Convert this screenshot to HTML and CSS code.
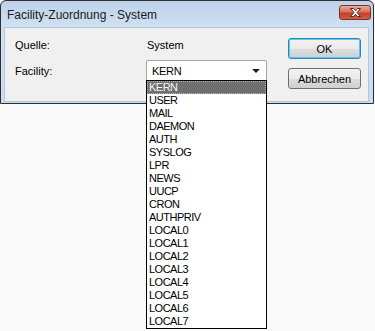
FILE: index.html
```html
<!DOCTYPE html>
<html lang="de">
<head>
  <meta charset="UTF-8">
  <title>Facility-Zuordnung - System</title>
  <link rel="stylesheet" href="styles.css">
</head>
<body>
  <div class="window">
    <div class="titlebar">
      <span class="title">Facility-Zuordnung - System</span>
      <button class="close" aria-label="Schließen">
        <svg width="13" height="11" viewBox="0 0 13 11">
          <path d="M1.5 1.5 L4.5 1.5 L6.5 3.8 L8.5 1.5 L11.5 1.5 L8 5.5 L11.5 9.5 L8.5 9.5 L6.5 7.2 L4.5 9.5 L1.5 9.5 L5 5.5 Z" fill="#fff" stroke="#5a2a24" stroke-width="1" stroke-linejoin="round"/>
        </svg>
      </button>
    </div>
    <div class="content">
      <div class="form">
        <span class="label">Quelle:</span>
        <span class="value">System</span>
        <span class="label">Facility:</span>
        <div class="combo">
          <div class="combo-box">
            <span>KERN</span>
            <span class="arrow"></span>
          </div>
          <ul class="list">
            <li class="selected">KERN</li>
            <li>USER</li>
            <li>MAIL</li>
            <li>DAEMON</li>
            <li>AUTH</li>
            <li>SYSLOG</li>
            <li>LPR</li>
            <li>NEWS</li>
            <li>UUCP</li>
            <li>CRON</li>
            <li>AUTHPRIV</li>
            <li>LOCAL0</li>
            <li>LOCAL1</li>
            <li>LOCAL2</li>
            <li>LOCAL3</li>
            <li>LOCAL4</li>
            <li>LOCAL5</li>
            <li>LOCAL6</li>
            <li>LOCAL7</li>
          </ul>
        </div>
      </div>
      <div class="buttons">
        <button class="btn default">OK</button>
        <button class="btn">Abbrechen</button>
      </div>
    </div>
  </div>
</body>
</html>
```

FILE: styles.css
```css
html, body {
  min-height: 100%;
}
body {
  margin: 0;
  min-height: 331px;
  background-color: #fafafa;
  font-family: 'Liberation Sans', Arial, sans-serif;
  font-size: 11px;
  color: #000;
}
.window {
  position: relative;
  z-index: 1;
  box-sizing: border-box;
  width: 374px;
  height: 104px;
  border: 1px solid #2e2e2e;
  border-radius: 6px 6px 0 0;
  background: linear-gradient(#bcd2ea, #d3e2f2 30%, #c9dcf0);
  padding: 0 4px 1px 3px;
}
.titlebar {
  height: 26px;
  display: flex;
  align-items: center;
  justify-content: space-between;
}
.title {
  font-size: 12px;
  color: #1b1b1b;
  padding-left: 3px;
  padding-top: 1px;
}
.close {
  width: 32px;
  height: 15px;
  margin-top: -4px;
  margin-right: -2px;
  padding: 0;
  border: 1px solid #7a3328;
  border-radius: 3px;
  background: linear-gradient(#e9a99c, #d9705d 45%, #c73f27 55%, #d45a3f);
  display: flex;
  align-items: center;
  justify-content: center;
}
.content {
  display: flex;
  height: 73px;
  background-color: #f0f0f0;
  border: 1px solid #b0c8e3;
}
.form {
  flex: 1;
  display: grid;
  grid-template-columns: 131px 121px;
  grid-template-rows: 21px 21px;
  row-gap: 5px;
  align-content: start;
  align-items: center;
  padding: 6px 0 0 10px;
}
.value {
  padding-left: 1px;
}
.combo {
  position: relative;
  height: 21px;
}
.combo-box {
  box-sizing: border-box;
  height: 21px;
  display: flex;
  align-items: center;
  justify-content: space-between;
  padding: 0 6px 0 5px;
  background-color: #fff;
  border: 1px solid #a5a5a5;
  border-radius: 2px;
  letter-spacing: -0.3px;
}
.arrow {
  width: 0;
  height: 0;
  border-left: 4px solid transparent;
  border-right: 4px solid transparent;
  border-top: 4px solid #14195a;
}
.list {
  position: absolute;
  z-index: 2;
  top: 20px;
  left: 0;
  width: 121px;
  height: 249px;
  box-sizing: border-box;
  margin: 0;
  padding: 0;
  list-style: none;
  background-color: #fff;
  border: 1px solid #000;
  letter-spacing: -0.5px;
}
.list li {
  height: 13px;
  line-height: 13px;
  padding-left: 2px;
}
.list li.selected {
  box-sizing: border-box;
  background-color: #6f6f6f;
  color: #f4f4f4;
  outline: 1px dotted #b5b5b5;
  outline-offset: -1px;
}
.buttons {
  display: flex;
  flex-direction: column;
  gap: 9px;
  padding: 10px 7px 0 0;
}
.btn {
  width: 73px;
  height: 21px;
  padding: 0;
  font-family: 'Liberation Sans', Arial, sans-serif;
  font-size: 11px;
  color: #000;
  border: 1px solid #707070;
  border-radius: 3px;
  background: linear-gradient(#f2f2f2, #ebebeb 50%, #dddddd 51%, #cfcfcf);
}
.btn.default {
  border-color: #3c7fb1;
  box-shadow: inset 0 0 0 1px #48d1f6;
}
```
